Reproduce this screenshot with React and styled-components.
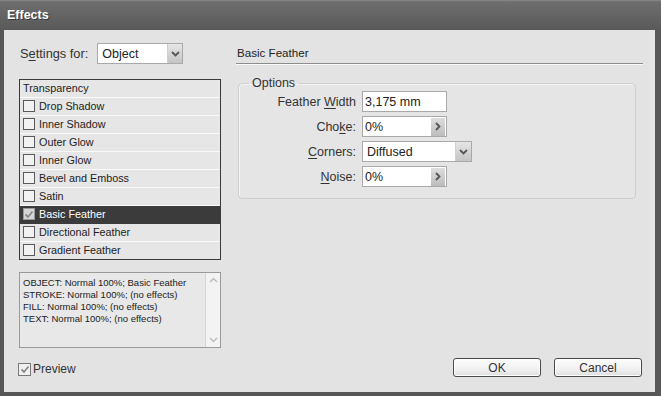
import React from "react";
import styled, { createGlobalStyle } from "styled-components";

const Global = createGlobalStyle`
  html, body { margin: 0; padding: 0; background: #e3e3e3; }
  * { box-sizing: border-box; }
  body { font-family: "Liberation Sans", Arial, sans-serif; color: #111; }
`;

const Frame = styled.div`
  width: 661px;
  height: 396px;
  background: #575757;
  display: flex;
  flex-direction: column;
  overflow: hidden;
`;

const TitleBar = styled.div`
  height: 30px;
  flex: none;
  display: flex;
  align-items: center;
  padding: 0 0 1px 7px;
  background: linear-gradient(#8a8a8a 0, #6e6e6e 2px, #646464 50%, #595959 100%);
  color: #fff;
  font-weight: bold;
  font-size: 12.5px;
  text-shadow: 1px 1px 0 #3a3a3a;
`;

const Body = styled.div`
  flex: 1;
  margin: 0 6px 4px 4px;
  background: #e3e3e3;
  display: grid;
  grid-template-columns: 202px 1fr;
  column-gap: 15px;
  padding: 12px 12px 15px 15px;
`;

const LeftCol = styled.div`
  display: flex;
  flex-direction: column;
`;

const RightCol = styled.div`
  display: flex;
  flex-direction: column;
`;

const SettingsRow = styled.div`
  height: 23px;
  display: flex;
  align-items: center;
  gap: 9px;
  padding-left: 1px;
  font-size: 12.8px;
  color: #333;
`;

const U = styled.span`
  text-decoration: underline;
  text-underline-offset: 2px;
`;

const Select = styled.div`
  width: ${(p) => p.$w}px;
  height: 21px;
  background: #fff;
  border: 1px solid #a9a9a9;
  display: flex;
  align-items: center;
  justify-content: space-between;
  padding-left: ${(p) => p.$pad ?? 4}px;
  font-size: ${(p) => p.$fs ?? 12.5}px;
  color: #222;
`;

const ArrowBtn = styled.div`
  width: ${(p) => p.$w ?? 15}px;
  height: 19px;
  background: linear-gradient(#e6e6e6, #c4c4c4);
  border-left: 1px solid #d0d0d0;
  display: flex;
  align-items: center;
  justify-content: center;
`;

const Chevron = ({ dir = "down" }) =>
  dir === "down" ? (
    <svg width="9" height="6" viewBox="0 0 9 6">
      <path d="M1 1 L4.5 4.5 L8 1" fill="none" stroke="#555" strokeWidth="1.8" />
    </svg>
  ) : (
    <svg width="6" height="9" viewBox="0 0 6 9">
      <path d="M1 1 L4.5 4.5 L1 8" fill="none" stroke="#555" strokeWidth="1.8" />
    </svg>
  );

const List = styled.div`
  margin-top: 14px;
  height: 181px;
  border: 1px solid #3a3a3a;
  background: #e6e6e6;
  display: flex;
  flex-direction: column;
`;

const Row = styled.div`
  height: 18px;
  flex: none;
  display: flex;
  align-items: center;
  gap: 4px;
  padding-left: 3px;
  padding-bottom: 1px;
  font-size: 10.8px;
  background: ${(p) => (p.$sel ? "#3b3b3b" : "#e6e6e6")};
  color: ${(p) => (p.$sel ? "#fff" : "#222")};
  border-bottom: 1px solid ${(p) => (p.$sel ? "#3b3b3b" : "#fafafa")};
  &:last-child { border-bottom: none; height: 17px; }
`;

const Box = styled.div`
  width: ${(p) => p.$s}px;
  height: ${(p) => p.$s}px;
  flex: none;
  border: 1px solid ${(p) => p.$border ?? "#5a5a5a"};
  background: ${(p) => p.$bg ?? "#f2f2f2"};
  display: flex;
  align-items: center;
  justify-content: center;
`;

const Check = ({ color = "#888" }) => (
  <svg width="10" height="9" viewBox="0 0 10 9">
    <path d="M1.5 4.5 L4 7 L8.5 1.5" fill="none" stroke={color} strokeWidth="1.8" />
  </svg>
);

const Summary = styled.div`
  margin-top: 12px;
  height: 76px;
  border: 1px solid #9a9a9a;
  background: #e8e8e8;
  display: flex;
`;

const SummaryText = styled.div`
  flex: 1;
  padding: 4px 0 0 3px;
  font-size: 9.5px;
  line-height: 12px;
  color: #222;
  white-space: nowrap;
`;

const Scroll = styled.div`
  width: 15px;
  background: #f3f3f3;
  border-left: 1px solid #d4d4d4;
  display: flex;
  flex-direction: column;
  justify-content: space-between;
  align-items: center;
  padding: 4px 0;
`;

const ScrollChevron = ({ up }) => (
  <svg width="9" height="6" viewBox="0 0 9 6">
    <path
      d={up ? "M1 5 L4.5 1.5 L8 5" : "M1 1 L4.5 4.5 L8 1"}
      fill="none"
      stroke="#bdbdbd"
      strokeWidth="1.5"
    />
  </svg>
);

const PreviewRow = styled.div`
  margin-top: 14px;
  display: flex;
  align-items: center;
  gap: 2px;
  font-size: 12px;
  color: #333;
  margin-left: -1px;
`;

const Header = styled.div`
  height: 22px;
  display: flex;
  align-items: center;
  font-size: 11.6px;
  color: #222;
  padding-left: 1px;
  border-bottom: 1px solid #8c8c8c;
  box-shadow: 0 1px 0 #fafafa;
`;

const Group = styled.fieldset`
  margin: 12px 7px 0 2px;
  height: 123px;
  padding: 1px 0 0 0;
  border: 1px solid #cfcfcf;
  border-radius: 4px;
  background: #e5e5e5;
  box-shadow: inset 1px 1px 0 #f4f4f4;
`;

const Legend = styled.legend`
  margin-left: 10px;
  padding: 0 3px;
  font-size: 12.5px;
  line-height: 14px;
  color: #333;
`;

const Form = styled.div`
  display: grid;
  grid-template-columns: 117px auto;
  column-gap: 6px;
  row-gap: 4px;
  justify-items: start;
  align-items: center;
`;

const Label = styled.div`
  justify-self: end;
  font-size: 12.5px;
  color: #333;
`;

const Field = styled.div`
  width: ${(p) => p.$w}px;
  height: 21px;
  background: #fff;
  border: 1px solid #a9a9a9;
  display: flex;
  align-items: center;
  justify-content: space-between;
  padding-left: 2px;
  font-size: 12.5px;
  color: #222;
`;

const SpinBtn = styled.div`
  width: 14px;
  height: 18px;
  margin-right: 1px;
  background: linear-gradient(#dedede, #bcbcbc);
  display: flex;
  align-items: center;
  justify-content: center;
`;

const Buttons = styled.div`
  margin-top: auto;
  display: flex;
  justify-content: flex-end;
  gap: 13px;
  padding-right: 1px;
`;

const Button = styled.button`
  width: 88px;
  height: 19px;
  padding: 0;
  border: 1px solid #4a4a4a;
  border-radius: 3px;
  background: linear-gradient(#fdfdfd, #eeeeee 70%, #dcdcdc);
  box-shadow: inset 0 0 0 1px #fff;
  font-family: "Liberation Sans", Arial, sans-serif;
  font-size: 12px;
  color: #333;
`;

const effects = [
  "Drop Shadow",
  "Inner Shadow",
  "Outer Glow",
  "Inner Glow",
  "Bevel and Emboss",
  "Satin",
  "Basic Feather",
  "Directional Feather",
  "Gradient Feather",
];

export default function App() {
  return (
    <>
      <Global />
      <Frame>
        <TitleBar>Effects</TitleBar>
        <Body>
          <LeftCol>
            <SettingsRow>
              <span>
                S<U>e</U>ttings for:
              </span>
              <Select $w={86}>
                Object
                <ArrowBtn>
                  <Chevron />
                </ArrowBtn>
              </Select>
            </SettingsRow>
            <List>
              <Row>Transparency</Row>
              {effects.map((e) => {
                const sel = e === "Basic Feather";
                return (
                  <Row key={e} $sel={sel}>
                    <Box $s={12} $bg={sel ? "#d6d6d6" : "#f2f2f2"} $border={sel ? "#999" : "#5a5a5a"}>
                      {sel && <Check color="#8a8a8a" />}
                    </Box>
                    {e}
                  </Row>
                );
              })}
            </List>
            <Summary>
              <SummaryText>
                OBJECT: Normal 100%; Basic Feather
                <br />
                STROKE: Normal 100%; (no effects)
                <br />
                FILL: Normal 100%; (no effects)
                <br />
                TEXT: Normal 100%; (no effects)
              </SummaryText>
              <Scroll>
                <ScrollChevron up />
                <ScrollChevron />
              </Scroll>
            </Summary>
            <PreviewRow>
              <Box $s={13} $border="#777" $bg="#f0f0f0">
                <Check color="#8a8a8a" />
              </Box>
              Preview
            </PreviewRow>
          </LeftCol>
          <RightCol>
            <Header>
              <span>Basic Feather</span>
            </Header>
            <Group>
              <Legend>Options</Legend>
              <Form>
                <Label>
                  Feather <U>W</U>idth
                </Label>
                <Field $w={85}>3,175 mm</Field>
                <Label>
                  Cho<U>k</U>e:
                </Label>
                <Field $w={85}>
                  0%
                  <SpinBtn>
                    <Chevron dir="right" />
                  </SpinBtn>
                </Field>
                <Label>
                  <U>C</U>orners:
                </Label>
                <Select $w={110} $pad={4} $fs={12.5}>
                  Diffused
                  <ArrowBtn $w={16}>
                    <Chevron />
                  </ArrowBtn>
                </Select>
                <Label>
                  <U>N</U>oise:
                </Label>
                <Field $w={85}>
                  0%
                  <SpinBtn>
                    <Chevron dir="right" />
                  </SpinBtn>
                </Field>
              </Form>
            </Group>
            <Buttons>
              <Button>OK</Button>
              <Button>Cancel</Button>
            </Buttons>
          </RightCol>
        </Body>
      </Frame>
    </>
  );
}
